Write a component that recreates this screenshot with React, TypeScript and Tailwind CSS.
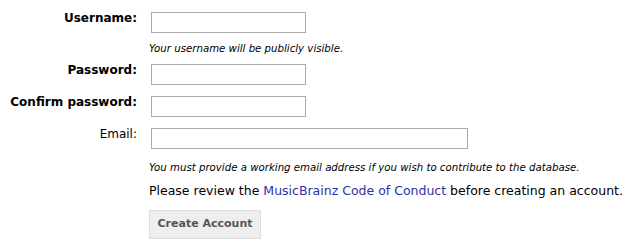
export default function App() {
  const font = { fontFamily: '"DejaVu Sans", Verdana, sans-serif' };
  const label = "w-[137px] shrink-0 text-right text-[12px] leading-[14px] mt-[-1px]";
  const input = "ml-[14px] h-[21px] border border-[#aaa] bg-white";
  return (
    <div className="bg-white w-[629px] h-[246px] text-black text-[12.5px]" style={font}>
      <div className="pt-[12px]">
        <div className="flex items-start">
          <label className={label + " font-bold"}>Username:</label>
          <input className={input + " w-[155px]"} />
        </div>
        <div className="ml-[149px] mt-[10px] text-[10.2px] leading-[12px] italic">Your username will be publicly visible.</div>
        <div className="flex items-start mt-[9px]">
          <label className={label + " font-bold"}>Password:</label>
          <input type="password" className={input + " w-[155px]"} />
        </div>
        <div className="flex items-start mt-[11px]">
          <label className={label + " font-bold"}>Confirm password:</label>
          <input type="password" className={input + " w-[155px]"} />
        </div>
        <div className="flex items-start mt-[11px]">
          <label className={label}>Email:</label>
          <input className={input + " w-[317px]"} />
        </div>
        <div className="ml-[149px] mt-[13px] text-[10.2px] leading-[12px] italic">You must provide a working email address if you wish to contribute to the database.</div>
        <div className="ml-[149px] mt-[9px] leading-[15px]">
          Please review the <a className="text-[#2a33a6]">MusicBrainz Code of Conduct</a> before creating an account.
        </div>
        <div className="ml-[149px] mt-[12px]">
          <button className="h-[29px] w-[112px] bg-[#eee] border border-[#ddd] text-[#555] text-[11px] font-bold">Create Account</button>
        </div>
      </div>
    </div>
  );
}
